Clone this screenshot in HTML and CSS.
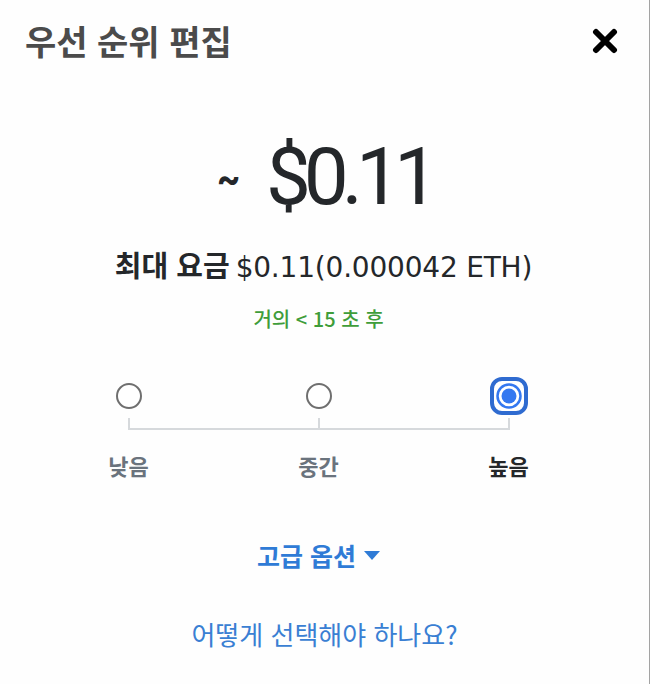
FILE: index.html
```html
<!DOCTYPE html>
<html lang="ko">
<head>
    <meta charset="UTF-8">
    <meta name="viewport" content="width=device-width, initial-scale=1.0">
    <title>우선 순위 편집</title>
    <link rel="stylesheet" href="styles.css">
</head>
<body>
    <div class="popover">
        <div class="header">
            <h1 class="title">우선 순위 편집</h1>
            <button class="close" aria-label="닫기">
                <svg width="26" height="26" viewBox="0 0 26 26">
                    <path d="M4 4 L22 22 M22 4 L4 22" stroke="#000" stroke-width="6" stroke-linecap="round"/>
                </svg>
            </button>
        </div>

        <div class="content">
            <div class="estimate">
                <span class="tilde">~</span>
                <span class="amount">$0.11</span>
            </div>

            <div class="max-fee">
                <strong>최대 요금</strong>$0.11(0.000042 ETH)
            </div>

            <div class="time">거의 &lt; 15 초 후</div>

            <div class="radios">
                <div class="radio-col">
                    <svg width="28" height="28" viewBox="0 0 28 28">
                        <circle cx="14" cy="14" r="12" fill="#fff" stroke="#6f6f6f" stroke-width="2"/>
                    </svg>
                </div>
                <div class="radio-col">
                    <svg width="28" height="28" viewBox="0 0 28 28">
                        <circle cx="14" cy="14" r="12" fill="#fff" stroke="#6f6f6f" stroke-width="2"/>
                    </svg>
                </div>
                <div class="radio-col">
                    <svg width="38" height="38" viewBox="0 0 38 38">
                        <rect x="2" y="2" width="34" height="34" rx="10" fill="#fff" stroke="#2f6bd0" stroke-width="4"/>
                        <circle cx="19" cy="19" r="11.5" fill="none" stroke="#3478f0" stroke-width="2.5"/>
                        <circle cx="19" cy="19" r="7.5" fill="#3478f0"/>
                    </svg>
                </div>
            </div>

            <div class="track">
                <div class="track-seg first"></div>
                <div class="track-seg"></div>
            </div>

            <div class="labels">
                <div class="label">낮음</div>
                <div class="label">중간</div>
                <div class="label active">높음</div>
            </div>

            <div class="advanced">고급 옵션 <span class="caret"></span></div>

            <div class="help">어떻게 선택해야 하나요?</div>
        </div>
    </div>
</body>
</html>
```

FILE: styles.css
```css
body {
    margin: 0;
    font-family: "Noto Sans CJK KR", Roboto, sans-serif;
    background: #fff;
}
.popover {
    width: 649px;
    height: 684px;
    border-right: 1px solid #a3a3a3;
    background: #fefefe;
}
.header {
    display: flex;
    justify-content: space-between;
    align-items: center;
    padding: 22px 31px 0 25px;
}
.title {
    margin: 0;
    font-size: 34px;
    line-height: 38px;
    font-weight: bold;
    color: #4b4b4b;
}
.close {
    border: none;
    background: none;
    padding: 0;
    display: flex;
}
.content {
    display: flex;
    flex-direction: column;
    align-items: center;
    padding-right: 12px;
}
.estimate {
    display: flex;
    align-items: center;
    margin-top: 77px;
    color: #24272a;
}
.tilde {
    font-family: Roboto, sans-serif;
    font-size: 36px;
    font-weight: 900;
    margin-right: 26px;
    margin-left: 12px;
    margin-top: 6px;
}
.amount {
    font-family: Roboto, sans-serif;
    font-size: 80px;
    line-height: 80px;
    letter-spacing: -7px;
}
.max-fee {
    margin-top: 31px;
    margin-left: 10px;
    font-family: "DejaVu Sans", sans-serif;
    font-size: 28px;
    line-height: 32px;
    letter-spacing: -0.2px;
    color: #24272a;
}
.max-fee strong {
    margin-right: 6px;
    font-family: "Noto Sans CJK KR", sans-serif;
    font-size: 29px;
    letter-spacing: 0;
}
.time {
    margin-top: 22px;
    font-size: 20px;
    font-weight: 500;
    line-height: 26px;
    color: #3f9d3a;
}
.radios {
    display: flex;
    margin-top: 45px;
    height: 38px;
}
.radio-col {
    width: 190px;
    display: flex;
    justify-content: center;
    align-items: center;
}
.track {
    display: flex;
    margin-top: 3px;
}
.track-seg {
    width: 188px;
    height: 10px;
    border-bottom: 2px solid #d6d9dc;
    border-right: 2px solid #d6d9dc;
}
.track-seg.first {
    border-left: 2px solid #d6d9dc;
}
.labels {
    display: flex;
    margin-top: 21px;
}
.label {
    width: 190px;
    text-align: center;
    font-size: 22px;
    line-height: 28px;
    font-weight: bold;
    color: #6a737d;
}
.label.active {
    color: #24272a;
}
.advanced {
    display: flex;
    align-items: center;
    margin-top: 61px;
    font-size: 25px;
    line-height: 30px;
    font-weight: bold;
    color: #2f7bd6;
}
.caret {
    width: 0;
    height: 0;
    margin-left: 8px;
    border-left: 8px solid transparent;
    border-right: 8px solid transparent;
    border-top: 9px solid #2f7bd6;
}
.help {
    margin-top: 48px;
    margin-left: 12px;
    font-size: 26px;
    line-height: 32px;
    color: #3a7fd3;
}
```
